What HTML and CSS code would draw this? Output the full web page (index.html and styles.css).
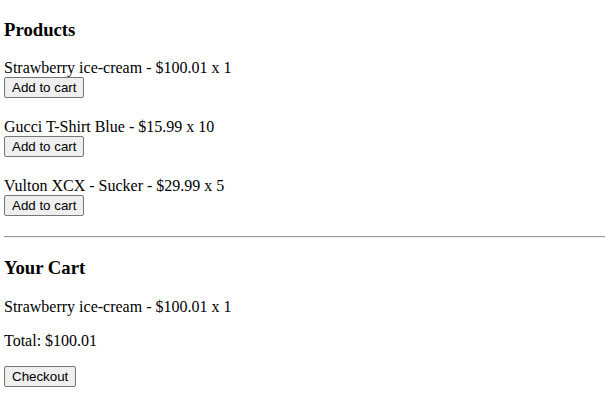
FILE: index.html
```html
<!DOCTYPE html>
<html>
<head>
<meta charset="utf-8">
<link rel="stylesheet" href="styles.css">
</head>
<body>
<h3 class="heading">Products</h3>
<div class="product">
  <div class="product-name">Strawberry ice-cream - $100.01 x 1</div>
  <button class="btn">Add to cart</button>
</div>
<div class="product">
  <div class="product-name">Gucci T-Shirt Blue - $15.99 x 10</div>
  <button class="btn">Add to cart</button>
</div>
<div class="product">
  <div class="product-name">Vulton XCX - Sucker - $29.99 x 5</div>
  <button class="btn">Add to cart</button>
</div>
<hr class="divider">
<h3 class="heading">Your Cart</h3>
<p class="line">Strawberry ice-cream - $100.01 x 1</p>
<p class="line">Total: $100.01</p>
<button class="btn">Checkout</button>
</body>
</html>
```
FILE: styles.css
```css
body {
  margin: 0;
  padding: 0 0 0 4px;
  font-family: "Liberation Serif", "Times New Roman", serif;
  font-size: 16px;
  color: #000;
  background: #fff;
}
.heading {
  font-size: 1.17em;
  font-weight: bold;
  margin: 18.72px 0;
}
.product {
  margin: 0 0 20px 0;
}
.product-name {
  line-height: normal;
}
.btn {
  display: block;
  font-family: "Liberation Sans", Arial, sans-serif;
  font-size: 13.333px;
  line-height: 15px;
  color: #000;
  background: #efefef;
  border: 1px solid #767676;
  border-radius: 2px;
  padding: 2px 7px;
  margin: 0;
}
.divider {
  margin: 8px 0;
  border: 0;
  border-top: 1px solid #9a9a9a;
  border-bottom: 1px solid #eeeeee;
  height: 0;
}
.line {
  margin: 16px 0;
}
```
